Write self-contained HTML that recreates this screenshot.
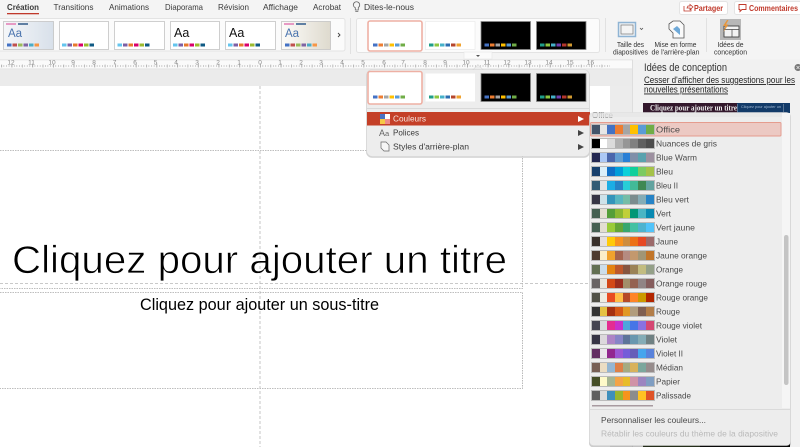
<!DOCTYPE html>
<html lang="fr"><head><meta charset="utf-8"><title>Création</title>
<style>
html,body{margin:0;padding:0;background:#fff}
#p{position:relative;width:800px;height:447px;overflow:hidden;font-family:"Liberation Sans",sans-serif}
svg{position:absolute;left:0;top:0}
svg text{font-family:"Liberation Sans",sans-serif;fill:#3a3a3a}
.t{font-size:8.5px;filter:blur(.25px)}
.s{font-size:7.5px;text-anchor:middle;fill:#333;filter:blur(.25px)}
.r{font-size:6.5px;fill:#8a8a8a;text-anchor:middle;filter:blur(.2px)}
.l{font-size:8.5px;fill:#4a4a4a;filter:blur(.25px)}
.sw{position:absolute;left:592px;width:61.6px;height:9px;display:flex;outline:.5px solid #bbb;filter:blur(.25px)}
.sw i{display:block;width:7.7px;height:9px}
</style></head><body><div id="p">
<svg width="800" height="447" viewBox="0 0 800 447">
<defs>
<pattern id="tick" width="2.59" height="8" patternUnits="userSpaceOnUse" x="1" y="60"><rect x="0" y="5" width=".6" height="2" fill="#b5b5b5"/></pattern>
<pattern id="maj" width="20.7" height="8" patternUnits="userSpaceOnUse" x="260" y="60"><rect x="0" y="3.500" width=".7" height="4" fill="#999"/><rect x="10.350" y="4.500" width=".7" height="3" fill="#aaa"/></pattern>
<linearGradient id="gb"><stop offset="0" stop-color="#f5f7f9"/><stop offset="1" stop-color="#d8e0ea"/></linearGradient>
<linearGradient id="gy"><stop offset="0" stop-color="#fdfcf9"/><stop offset="1" stop-color="#dedace"/></linearGradient>
</defs>
<!-- base -->
<rect width="800" height="447" fill="#fff"/>
<rect width="800" height="60" fill="#f4f4f4"/>
<!-- tabs -->
<text x="7" y="10" class="t" style="font-weight:bold" textLength="32" lengthAdjust="spacingAndGlyphs">Création</text>
<rect x="7" y="13" width="32" height="1.300" fill="#c0392b"/>
<text x="53.500" y="10" class="t" textLength="40" lengthAdjust="spacingAndGlyphs">Transitions</text>
<text x="109" y="10" class="t" textLength="40" lengthAdjust="spacingAndGlyphs">Animations</text>
<text x="165" y="10" class="t" textLength="38" lengthAdjust="spacingAndGlyphs">Diaporama</text>
<text x="218" y="10" class="t" textLength="31" lengthAdjust="spacingAndGlyphs">Révision</text>
<text x="263" y="10" class="t" textLength="35" lengthAdjust="spacingAndGlyphs">Affichage</text>
<text x="313" y="10" class="t" textLength="28" lengthAdjust="spacingAndGlyphs">Acrobat</text>
<path d="M353 5a3.200 3.200 0 1 1 5 2.600V10h-3V7.600A3.200 3.200 0 0 1 353 5zM355 11.500h3" transform="translate(.3 0)" fill="none" stroke="#666" stroke-width=".8"/>
<text x="364" y="10" class="t" textLength="50" lengthAdjust="spacingAndGlyphs">Dites-le-nous</text>
<!-- share buttons -->
<rect x="679.500" y="1.500" width="48" height="13" rx="2" fill="#fff" stroke="#e4e4e4"/>
<path d="M684 6v5h7V8M687 8l1-2h2V4.500l3 2.500-3 2.500V8h-1z" fill="none" stroke="#c0392b" stroke-width=".8"/>
<text x="694" y="11" class="t" style="fill:#c0392b;font-weight:bold" textLength="29" lengthAdjust="spacingAndGlyphs">Partager</text>
<rect x="734.500" y="1.500" width="70" height="13" rx="2" fill="#fff" stroke="#e4e4e4"/>
<path d="M739 4.500h7v5h-4l-2 2v-2h-1z" fill="none" stroke="#c0392b" stroke-width=".9"/>
<text x="749" y="11" class="t" style="fill:#c0392b;font-weight:bold" textLength="49" lengthAdjust="spacingAndGlyphs">Commentaires</text>
<!-- ribbon galleries -->
<rect x="-2" y="18.500" width="347" height="32.500" rx="2" fill="#fbfbfb" stroke="#e3e3e3"/>
<rect x="356.500" y="18.500" width="243" height="34" rx="2" fill="#fbfbfb" stroke="#e3e3e3"/>
<rect x="350" y="18" width=".8" height="36" fill="#dcdcdc"/>
<rect x="605" y="18" width=".8" height="34" fill="#dcdcdc"/>
<rect x="706" y="18" width=".8" height="34" fill="#dcdcdc"/>
<rect x="464" y="52" width="28" height="7" fill="#fbfbfb" stroke="#e6e6e6" stroke-width=".6"/>
<path d="M476 55h4l-2 2z" fill="#555"/>
<path d="M338 33l2 2-2 2" fill="none" stroke="#444" stroke-width=".9"/>
<!-- gallery 1 thumbs -->
<g stroke="#c4c4c4" stroke-width=".8">
<rect x="3.500" y="21.500" width="50" height="28" fill="url(#gb)"/>
<rect x="59.500" y="21.500" width="49" height="28" fill="#fff"/>
<rect x="114.500" y="21.500" width="50" height="28" fill="#fff"/>
<rect x="170.500" y="21.500" width="49" height="28" fill="#fff"/>
<rect x="225.500" y="21.500" width="50" height="28" fill="#fff"/>
<rect x="281.500" y="21.500" width="49" height="28" fill="url(#gy)"/>
</g>
<rect x="6" y="23" width="10" height="2" fill="#e79ac4"/><rect x="18" y="23" width="10" height="2" fill="#5f7fa3"/>
<rect x="284" y="23" width="10" height="2" fill="#e79ac4"/><rect x="296" y="23" width="10" height="2" fill="#5f7fa3"/>
<text x="8" y="37" style="font-size:11.500px;fill:#4a74ae">Aa</text>
<text x="285" y="37" style="font-size:11.500px;fill:#4a74ae">Aa</text>
<text x="174" y="37" style="font-size:12.500px;fill:#111">Aa</text>
<text x="229" y="37" style="font-size:12.500px;fill:#111">Aa</text>
<g id="b1"><rect x="7" y="43.500" width="4.500" height="3" fill="#4472c4"/><rect x="12.500" y="43.500" width="4.500" height="3" fill="#c0504d"/><rect x="18" y="43.500" width="4.500" height="3" fill="#9bbb59"/><rect x="23.500" y="43.500" width="4.500" height="3" fill="#8064a2"/><rect x="29" y="43.500" width="4.500" height="3" fill="#4bacc6"/><rect x="34.500" y="43.500" width="4.500" height="3" fill="#f79646"/></g>
<use href="#b1" x="278"/>
<g id="b2"><rect x="62" y="43.500" width="4.500" height="3" fill="#63c5ee"/><rect x="67.500" y="43.500" width="4.500" height="3" fill="#7c5fa5"/><rect x="73" y="43.500" width="4.500" height="3" fill="#e8792c"/><rect x="78.500" y="43.500" width="4.500" height="3" fill="#d9006c"/><rect x="84" y="43.500" width="4.500" height="3" fill="#9bbb2e"/><rect x="89.500" y="43.500" width="4.500" height="3" fill="#0f5a84"/></g>
<use href="#b2" x="55.500"/><use href="#b2" x="111"/><use href="#b2" x="166"/>
<!-- gallery 2 thumbs -->
<g id="g2">
<rect x="368" y="21" width="54" height="30" rx="2" fill="#fff" stroke="#eeb0a4" stroke-width="1.600"/>
<rect x="425.500" y="21.500" width="49.500" height="28" fill="#fff" stroke="#e6e6e6" stroke-width=".6"/>
<rect x="481" y="21.500" width="49.500" height="28" fill="#000" stroke="#888" stroke-width=".8"/>
<rect x="536.500" y="21.500" width="49.500" height="28" fill="#000" stroke="#888" stroke-width=".8"/>
<g><rect x="373" y="43.500" width="4.500" height="3" fill="#4472c4"/><rect x="378.500" y="43.500" width="4.500" height="3" fill="#ed7d31"/><rect x="384" y="43.500" width="4.500" height="3" fill="#a5a5a5"/><rect x="389.500" y="43.500" width="4.500" height="3" fill="#ffc000"/><rect x="395" y="43.500" width="4.500" height="3" fill="#5b9bd5"/><rect x="400.500" y="43.500" width="4.500" height="3" fill="#70ad47"/></g>
<g><rect x="429" y="43.500" width="4.500" height="3" fill="#1f9e89"/><rect x="434.500" y="43.500" width="4.500" height="3" fill="#8cc63f"/><rect x="440" y="43.500" width="4.500" height="3" fill="#46b1c9"/><rect x="445.500" y="43.500" width="4.500" height="3" fill="#2b6cb0"/><rect x="451" y="43.500" width="4.500" height="3" fill="#b5462c"/><rect x="456.500" y="43.500" width="4.500" height="3" fill="#f0a22e"/></g>
<g><rect x="484.500" y="43.500" width="4.500" height="3" fill="#4472c4"/><rect x="490" y="43.500" width="4.500" height="3" fill="#ed7d31"/><rect x="495.500" y="43.500" width="4.500" height="3" fill="#a5a5a5"/><rect x="501" y="43.500" width="4.500" height="3" fill="#ffc000"/><rect x="506.500" y="43.500" width="4.500" height="3" fill="#5b9bd5"/><rect x="512" y="43.500" width="4.500" height="3" fill="#70ad47"/></g>
<g><rect x="540" y="43.500" width="4.500" height="3" fill="#1f9e89"/><rect x="545.500" y="43.500" width="4.500" height="3" fill="#8cc63f"/><rect x="551" y="43.500" width="4.500" height="3" fill="#46b1c9"/><rect x="556.500" y="43.500" width="4.500" height="3" fill="#7040b0"/><rect x="562" y="43.500" width="4.500" height="3" fill="#b5362c"/><rect x="567.500" y="43.500" width="4.500" height="3" fill="#d29a30"/></g>
</g>
<!-- ribbon tools -->
<rect x="618.500" y="22.500" width="17" height="14" fill="#eef2f5" stroke="#8fb4d4" stroke-width="1.500"/>
<rect x="621" y="25" width="12" height="9" fill="#f4f4f4" stroke="#777" stroke-width=".7"/>
<path d="M640 28l1.500 1.500 1.500-1.500" fill="none" stroke="#555" stroke-width=".8"/>
<path d="M669 24l4-3h7l4 4v13h-11v-5l-4-4z" fill="#fafafa" stroke="#555" stroke-width=".8"/>
<path d="M673 29l4-3 3 3v6z" fill="#6fa9d8"/>
<rect x="720" y="19" width="21" height="21" fill="#b7b7b7"/>
<rect x="724" y="26" width="15" height="11" fill="#f3f3f3" stroke="#444" stroke-width=".9"/>
<path d="M724 29.500h15M732 29.500v7.500" stroke="#444" stroke-width=".7"/>
<path d="M727 20l-4 6h2.500l-2 6 5-7.500h-2.500l2.500-4.500z" fill="#e8963a"/>
<text x="630.500" y="47" class="s" textLength="27" lengthAdjust="spacingAndGlyphs">Taille des</text>
<text x="630.500" y="54.500" class="s" textLength="35" lengthAdjust="spacingAndGlyphs">diapositives</text>
<text x="675.500" y="47" class="s" textLength="42" lengthAdjust="spacingAndGlyphs">Mise en forme</text>
<text x="675.500" y="54.500" class="s" textLength="48" lengthAdjust="spacingAndGlyphs">de l'arrière-plan</text>
<text x="730.500" y="47" class="s" textLength="26" lengthAdjust="spacingAndGlyphs">Idées de</text>
<text x="730.500" y="54.500" class="s" textLength="33" lengthAdjust="spacingAndGlyphs">conception</text>
<!-- ruler -->
<rect x="0" y="59.500" width="632" height="9.500" fill="#fafafa"/>
<rect x="0" y="59.500" width="800" height=".8" fill="#dedede"/>
<rect x="0" y="60" width="610" height="8" fill="url(#tick)"/>
<rect x="0" y="60" width="610" height="8" fill="url(#maj)"/>
<rect x="0" y="69" width="632" height="17" fill="#ebebeb"/>
<rect x="0" y="68.500" width="632" height=".8" fill="#e0e0e0"/>
<g><text class="r" x="11" y="64.500">12</text><text class="r" x="31.500" y="64.500">11</text><text class="r" x="52" y="64.500">10</text><text class="r" x="73" y="64.500">9</text><text class="r" x="94" y="64.500">8</text><text class="r" x="114.500" y="64.500">7</text><text class="r" x="135" y="64.500">6</text><text class="r" x="155.500" y="64.500">5</text><text class="r" x="176" y="64.500">4</text><text class="r" x="197" y="64.500">3</text><text class="r" x="218" y="64.500">2</text><text class="r" x="239" y="64.500">1</text><text class="r" x="260" y="64.500">0</text><text class="r" x="280" y="64.500">1</text><text class="r" x="301" y="64.500">2</text><text class="r" x="321" y="64.500">3</text><text class="r" x="342" y="64.500">4</text><text class="r" x="363" y="64.500">5</text><text class="r" x="384" y="64.500">6</text><text class="r" x="403" y="64.500">7</text><text class="r" x="425" y="64.500">8</text><text class="r" x="445" y="64.500">9</text><text class="r" x="466" y="64.500">10</text><text class="r" x="487" y="64.500">11</text><text class="r" x="507" y="64.500">12</text><text class="r" x="528" y="64.500">13</text><text class="r" x="549" y="64.500">14</text><text class="r" x="570" y="64.500">15</text><text class="r" x="590.500" y="64.500">16</text></g>
<!-- slide -->
<rect x="0" y="86" width="610" height="361" fill="#fff"/>
<rect x="610" y="86" width="22" height="361" fill="#ececec"/>
<!-- right panel -->
<rect x="632" y="59.500" width="168" height="388" fill="#f1f1f1"/>
<rect x="632" y="59.500" width=".8" height="388" fill="#d9d9d9"/>
<text x="644" y="71" class="t" style="font-size:11px;fill:#333" textLength="83" lengthAdjust="spacingAndGlyphs">Idées de conception</text>
<text x="644" y="83" class="t" style="font-size:9px;fill:#222;text-decoration:underline" textLength="151" lengthAdjust="spacingAndGlyphs">Cesser d'afficher des suggestions pour les</text>
<text x="644" y="92.500" class="t" style="font-size:9px;fill:#222;text-decoration:underline" textLength="84" lengthAdjust="spacingAndGlyphs">nouvelles présentations</text>
<circle cx="798" cy="67.500" r="3.500" fill="#777"/>
<path d="M796.500 66l3 3m0-3l-3 3" stroke="#eee" stroke-width=".7"/>
<rect x="643" y="103" width="94" height="12" fill="#33182c"/>
<rect x="737" y="103" width="53" height="12" fill="#123a68"/>
<path d="M737.500 104v8M783.500 104v8" stroke="#9ab" stroke-width=".5"/>
<text x="650" y="110.500" class="t" style="font-family:'Liberation Serif',serif;font-size:8.500px;font-weight:bold;fill:#eee" textLength="87" lengthAdjust="spacingAndGlyphs">Cliquez pour ajouter un titre</text>
<text x="741" y="108" class="t" style="font-size:4px;fill:#9db6d2" textLength="40" lengthAdjust="spacingAndGlyphs">Cliquez pour ajouter un</text>
<rect x="643" y="440" width="57" height="7" fill="#2f3a22"/>
<rect x="700" y="440" width="90" height="7" fill="#0a0a0a"/>
<!-- slide placeholders -->
<g fill="none" stroke="#a9a9a9" stroke-width=".8" stroke-dasharray="1.500 1">
<path d="M0 150.500H522.500V288.500H0"/>
<path d="M0 292.500H522.500V388.500H0"/>
</g>
<g fill="none" stroke="#b8b8b8" stroke-width=".8" stroke-dasharray="3 2">
<path d="M260 86V447"/><path d="M0 283.500H600"/>
</g>
<text x="12" y="273" style="font-size:39px;fill:#000;stroke:#fff;stroke-width:.7px" textLength="495" lengthAdjust="spacingAndGlyphs">Cliquez pour ajouter un titre</text>
<text x="140" y="310" style="font-size:16.500px;fill:#000" textLength="239" lengthAdjust="spacingAndGlyphs">Cliquez pour ajouter un sous-titre</text>
<!-- popover 1 -->
<rect x="366" y="69" width="224" height="87.500" rx="6" fill="#000" opacity=".18" transform="translate(0 1.200)"/>
<rect x="366.500" y="69.500" width="223" height="87" rx="6" fill="#ededed" stroke="#d6d6d6" stroke-width=".6"/>
<path d="M473 69.700l5-5 5 5z" fill="#ededed" stroke="#d6d6d6" stroke-width=".6"/>
<rect x="368" y="71.500" width="54" height="32.500" rx="2" fill="#fff" stroke="#eeb0a4" stroke-width="1.600"/>
<rect x="425.500" y="73.500" width="49.500" height="28" fill="#fff"/>
<rect x="481" y="73.500" width="49.500" height="28" fill="#000" stroke="#888" stroke-width=".8"/>
<rect x="536.500" y="73.500" width="49.500" height="28" fill="#000" stroke="#888" stroke-width=".8"/>
<g transform="translate(0 52)">
<g><rect x="373" y="43.500" width="4.500" height="3" fill="#4472c4"/><rect x="378.500" y="43.500" width="4.500" height="3" fill="#ed7d31"/><rect x="384" y="43.500" width="4.500" height="3" fill="#a5a5a5"/><rect x="389.500" y="43.500" width="4.500" height="3" fill="#ffc000"/><rect x="395" y="43.500" width="4.500" height="3" fill="#5b9bd5"/><rect x="400.500" y="43.500" width="4.500" height="3" fill="#70ad47"/></g>
<g><rect x="429" y="43.500" width="4.500" height="3" fill="#1f9e89"/><rect x="434.500" y="43.500" width="4.500" height="3" fill="#8cc63f"/><rect x="440" y="43.500" width="4.500" height="3" fill="#46b1c9"/><rect x="445.500" y="43.500" width="4.500" height="3" fill="#2b6cb0"/><rect x="451" y="43.500" width="4.500" height="3" fill="#b5462c"/><rect x="456.500" y="43.500" width="4.500" height="3" fill="#f0a22e"/></g>
<g><rect x="484.500" y="43.500" width="4.500" height="3" fill="#4472c4"/><rect x="490" y="43.500" width="4.500" height="3" fill="#ed7d31"/><rect x="495.500" y="43.500" width="4.500" height="3" fill="#a5a5a5"/><rect x="501" y="43.500" width="4.500" height="3" fill="#ffc000"/><rect x="506.500" y="43.500" width="4.500" height="3" fill="#5b9bd5"/><rect x="512" y="43.500" width="4.500" height="3" fill="#70ad47"/></g>
<g><rect x="540" y="43.500" width="4.500" height="3" fill="#1f9e89"/><rect x="545.500" y="43.500" width="4.500" height="3" fill="#8cc63f"/><rect x="551" y="43.500" width="4.500" height="3" fill="#46b1c9"/><rect x="556.500" y="43.500" width="4.500" height="3" fill="#7040b0"/><rect x="562" y="43.500" width="4.500" height="3" fill="#b5362c"/><rect x="567.500" y="43.500" width="4.500" height="3" fill="#d29a30"/></g>
</g>
<rect x="367" y="108" width="222" height=".8" fill="#d4d4d4"/>
<rect x="367" y="112" width="223" height="13.500" fill="#c43f27"/>
<rect x="380" y="114" width="5" height="5" fill="#4a72c4"/><rect x="385" y="114" width="5" height="5" fill="#fff"/><rect x="380" y="119" width="5" height="5" fill="#f6c945"/><rect x="385" y="119" width="5" height="5" fill="#ef8a8a"/>
<text x="393" y="121.500" class="t" style="fill:#f5e6e0" textLength="33" lengthAdjust="spacingAndGlyphs">Couleurs</text>
<path d="M578 116l6 3-6 3z" fill="#fff"/>
<text x="379" y="136" style="font-size:9px;fill:#666">A</text><text x="385" y="136" style="font-size:7.500px;fill:#666">a</text>
<text x="393" y="135.500" class="t" textLength="26" lengthAdjust="spacingAndGlyphs">Polices</text>
<path d="M578 130l6 3-6 3z" fill="#444"/>
<path d="M381 142h5l3 3v6h-5l-3-3z" fill="#f6f6f6" stroke="#666" stroke-width=".7"/>
<text x="393" y="149.500" class="t" textLength="76" lengthAdjust="spacingAndGlyphs">Styles d'arrière-plan</text>
<path d="M578 144l6 3-6 3z" fill="#444"/>
<!-- submenu -->
<rect x="589" y="112" width="202" height="334" rx="4" fill="#000" opacity=".2" transform="translate(0 1.200)"/>
<rect x="589.500" y="112.500" width="201" height="333" rx="4" fill="#ededed" stroke="#d9d9d9" stroke-width=".6"/>
<rect x="782" y="113" width="8" height="295" fill="#f5f5f5"/>
<text x="592" y="118" style="font-size:8px;fill:#888" textLength="21" lengthAdjust="spacingAndGlyphs">Office</text>
<rect x="590" y="113" width="192" height="4" fill="#e6e6e6" opacity=".75"/>
<rect x="784" y="235" width="4.500" height="150" rx="2.200" fill="#c4c4c4"/>
<rect x="590.500" y="122.500" width="190.500" height="13.500" rx="1" fill="#ecc9c3" stroke="#e59c8e" stroke-width=".9"/>
<g>
<text class="l" x="656" y="132.500" textLength="24" lengthAdjust="spacingAndGlyphs">Office</text>
<text class="l" x="656" y="146.500" textLength="61" lengthAdjust="spacingAndGlyphs">Nuances de gris</text>
<text class="l" x="656" y="160.500" textLength="41" lengthAdjust="spacingAndGlyphs">Blue Warm</text>
<text class="l" x="656" y="174.500" textLength="17" lengthAdjust="spacingAndGlyphs">Bleu</text>
<text class="l" x="656" y="188.500" textLength="22" lengthAdjust="spacingAndGlyphs">Bleu II</text>
<text class="l" x="656" y="202.500" textLength="33" lengthAdjust="spacingAndGlyphs">Bleu vert</text>
<text class="l" x="656" y="216.500" textLength="15" lengthAdjust="spacingAndGlyphs">Vert</text>
<text class="l" x="656" y="230.500" textLength="39" lengthAdjust="spacingAndGlyphs">Vert jaune</text>
<text class="l" x="656" y="244.500" textLength="22" lengthAdjust="spacingAndGlyphs">Jaune</text>
<text class="l" x="656" y="258.500" textLength="51" lengthAdjust="spacingAndGlyphs">Jaune orange</text>
<text class="l" x="656" y="272.500" textLength="27" lengthAdjust="spacingAndGlyphs">Orange</text>
<text class="l" x="656" y="286.500" textLength="51" lengthAdjust="spacingAndGlyphs">Orange rouge</text>
<text class="l" x="656" y="300.500" textLength="52" lengthAdjust="spacingAndGlyphs">Rouge orange</text>
<text class="l" x="656" y="314.500" textLength="24" lengthAdjust="spacingAndGlyphs">Rouge</text>
<text class="l" x="656" y="328.500" textLength="46" lengthAdjust="spacingAndGlyphs">Rouge violet</text>
<text class="l" x="656" y="342.500" textLength="21" lengthAdjust="spacingAndGlyphs">Violet</text>
<text class="l" x="656" y="356.500" textLength="27" lengthAdjust="spacingAndGlyphs">Violet II</text>
<text class="l" x="656" y="370.500" textLength="27" lengthAdjust="spacingAndGlyphs">Médian</text>
<text class="l" x="656" y="384.500" textLength="24" lengthAdjust="spacingAndGlyphs">Papier</text>
<text class="l" x="656" y="398.500" textLength="35" lengthAdjust="spacingAndGlyphs">Palissade</text>
</g>
<rect x="592" y="405" width="61" height="1.500" fill="#a89aa0"/>
<rect x="590" y="409" width="200" height=".8" fill="#d6d6d6"/>
<text x="601" y="423" class="l" textLength="105" lengthAdjust="spacingAndGlyphs">Personnaliser les couleurs...</text>
<text x="601" y="436.500" class="l" style="fill:#b9b9b9" textLength="177" lengthAdjust="spacingAndGlyphs">Rétablir les couleurs du thème de la diapositive</text>
</svg>
<div class="sw" style="top:125px"><i style="background:#44546a"></i><i style="background:#e7e6e6"></i><i style="background:#4472c4"></i><i style="background:#ed7d31"></i><i style="background:#a5a5a5"></i><i style="background:#ffc000"></i><i style="background:#5b9bd5"></i><i style="background:#70ad47"></i></div>
<div class="sw" style="top:139px"><i style="background:#000"></i><i style="background:#fff"></i><i style="background:#dbdbdb"></i><i style="background:#b0b0b0"></i><i style="background:#969696"></i><i style="background:#808080"></i><i style="background:#5f5f5f"></i><i style="background:#4d4d4d"></i></div>
<div class="sw" style="top:153px"><i style="background:#242852"></i><i style="background:#acc8f5"></i><i style="background:#4a66ac"></i><i style="background:#629dd1"></i><i style="background:#297fd5"></i><i style="background:#7f8fa9"></i><i style="background:#5aa2ae"></i><i style="background:#9d90a0"></i></div>
<div class="sw" style="top:167px"><i style="background:#17406d"></i><i style="background:#dbeffa"></i><i style="background:#0f6fc6"></i><i style="background:#009dd9"></i><i style="background:#0bd0d9"></i><i style="background:#10cf9b"></i><i style="background:#7cca62"></i><i style="background:#a5c249"></i></div>
<div class="sw" style="top:181px"><i style="background:#335b74"></i><i style="background:#dfe3e5"></i><i style="background:#1cade4"></i><i style="background:#2683c6"></i><i style="background:#27ced7"></i><i style="background:#42ba97"></i><i style="background:#3e8853"></i><i style="background:#62a39f"></i></div>
<div class="sw" style="top:195px"><i style="background:#373545"></i><i style="background:#cee2e9"></i><i style="background:#3494ba"></i><i style="background:#58b6c0"></i><i style="background:#75bda7"></i><i style="background:#7a8c8e"></i><i style="background:#84acb6"></i><i style="background:#2683c6"></i></div>
<div class="sw" style="top:209px"><i style="background:#455f51"></i><i style="background:#e3ded1"></i><i style="background:#549e39"></i><i style="background:#8ab833"></i><i style="background:#c0cf3a"></i><i style="background:#029676"></i><i style="background:#4ab5c4"></i><i style="background:#0989b1"></i></div>
<div class="sw" style="top:223px"><i style="background:#455f51"></i><i style="background:#e3ded1"></i><i style="background:#99cb38"></i><i style="background:#63a537"></i><i style="background:#37a76f"></i><i style="background:#44c1a3"></i><i style="background:#4eb3cf"></i><i style="background:#51c3f9"></i></div>
<div class="sw" style="top:237px"><i style="background:#39302a"></i><i style="background:#e5dedb"></i><i style="background:#ffca08"></i><i style="background:#f8931d"></i><i style="background:#ce8d3e"></i><i style="background:#ec7016"></i><i style="background:#e64823"></i><i style="background:#9c6a6a"></i></div>
<div class="sw" style="top:251px"><i style="background:#4e3b30"></i><i style="background:#fbeec9"></i><i style="background:#f0a22e"></i><i style="background:#a5644e"></i><i style="background:#b58b80"></i><i style="background:#c3986d"></i><i style="background:#a19574"></i><i style="background:#c17529"></i></div>
<div class="sw" style="top:265px"><i style="background:#637052"></i><i style="background:#ccddea"></i><i style="background:#e48312"></i><i style="background:#bd582c"></i><i style="background:#865640"></i><i style="background:#9b8357"></i><i style="background:#c2bc80"></i><i style="background:#94a088"></i></div>
<div class="sw" style="top:279px"><i style="background:#696464"></i><i style="background:#e9e5dc"></i><i style="background:#d34817"></i><i style="background:#9b2d1f"></i><i style="background:#a28e6a"></i><i style="background:#956251"></i><i style="background:#918485"></i><i style="background:#855d5d"></i></div>
<div class="sw" style="top:293px"><i style="background:#505046"></i><i style="background:#eeece1"></i><i style="background:#e84c22"></i><i style="background:#ffbd47"></i><i style="background:#b64926"></i><i style="background:#ff8427"></i><i style="background:#cc9900"></i><i style="background:#b22600"></i></div>
<div class="sw" style="top:307px"><i style="background:#323232"></i><i style="background:#e5c243"></i><i style="background:#a5300f"></i><i style="background:#d55816"></i><i style="background:#e19825"></i><i style="background:#b19c7d"></i><i style="background:#7f5f52"></i><i style="background:#b27d49"></i></div>
<div class="sw" style="top:321px"><i style="background:#454551"></i><i style="background:#d8d9dc"></i><i style="background:#e32d91"></i><i style="background:#c830cc"></i><i style="background:#4ea6dc"></i><i style="background:#4775e7"></i><i style="background:#8971e1"></i><i style="background:#d54773"></i></div>
<div class="sw" style="top:335px"><i style="background:#373545"></i><i style="background:#dcd8dc"></i><i style="background:#ad84c6"></i><i style="background:#8784c7"></i><i style="background:#5d739a"></i><i style="background:#6997af"></i><i style="background:#84acb6"></i><i style="background:#6f8183"></i></div>
<div class="sw" style="top:349px"><i style="background:#632e62"></i><i style="background:#eae5eb"></i><i style="background:#92278f"></i><i style="background:#9b57d3"></i><i style="background:#755dd9"></i><i style="background:#665eb8"></i><i style="background:#45a5ed"></i><i style="background:#5982db"></i></div>
<div class="sw" style="top:363px"><i style="background:#775f55"></i><i style="background:#ebddc3"></i><i style="background:#94b6d2"></i><i style="background:#dd8047"></i><i style="background:#a5ab81"></i><i style="background:#d8b25c"></i><i style="background:#7ba79d"></i><i style="background:#968c8c"></i></div>
<div class="sw" style="top:377px"><i style="background:#444d26"></i><i style="background:#fefac9"></i><i style="background:#a5b592"></i><i style="background:#f3a447"></i><i style="background:#e7bc29"></i><i style="background:#d092a7"></i><i style="background:#9c85c0"></i><i style="background:#809ec2"></i></div>
<div class="sw" style="top:391px"><i style="background:#5f5f5f"></i><i style="background:#dcdcdc"></i><i style="background:#3f8fbc"></i><i style="background:#9bb62f"></i><i style="background:#f7941d"></i><i style="background:#8c8c8c"></i><i style="background:#ffc222"></i><i style="background:#df5327"></i></div>
</div></body></html>
